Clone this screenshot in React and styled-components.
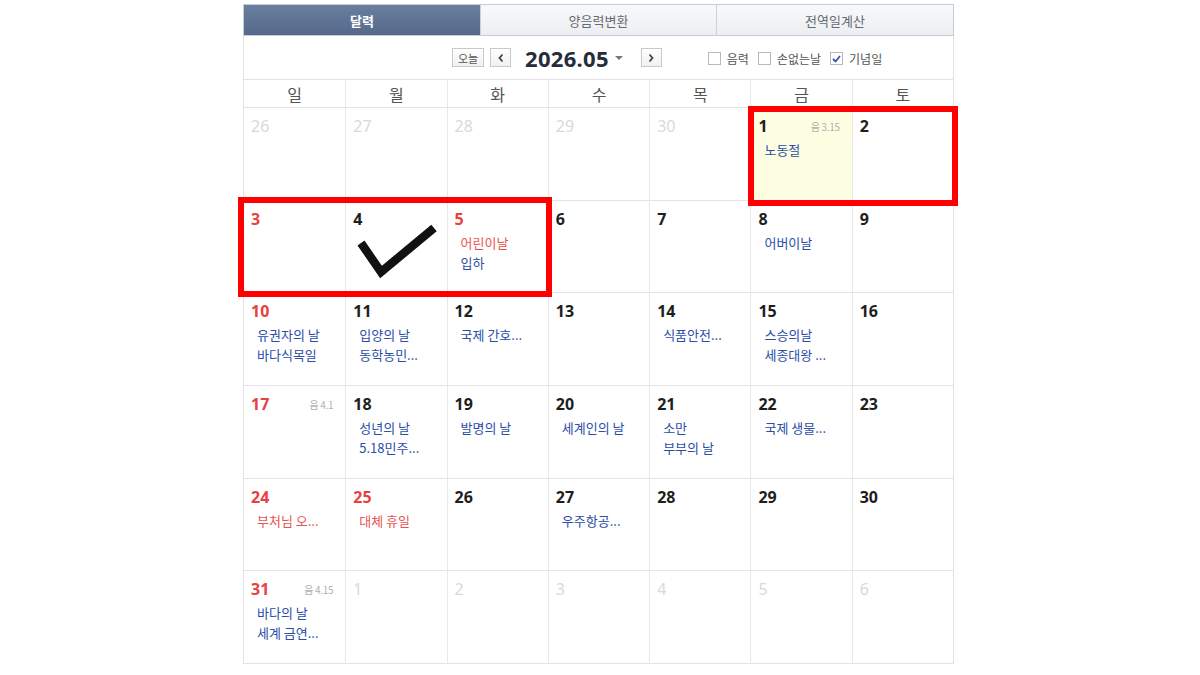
import React from 'react';
import styled, { createGlobalStyle } from 'styled-components';

const GlobalStyle = createGlobalStyle`
  html, body {
    margin: 0;
    padding: 0;
    background: #ffffff;
    font-family: "Noto Sans", "Noto Sans CJK KR", sans-serif;
  }
`;

const Page = styled.div`
  width: 1200px;
  height: 675px;
  overflow: hidden;
  padding-top: 4px;
  box-sizing: border-box;
`;

const Calendar = styled.div`
  position: relative;
  width: 711px;
  margin-left: 243px;
`;

const Tabs = styled.div`
  display: grid;
  grid-template-columns: 236px 236px 1fr;
  height: 32px;
  border: 1px solid #c6ccd5;
  box-sizing: border-box;
`;

const Tab = styled.div`
  display: flex;
  align-items: center;
  justify-content: center;
  font-size: 13px;
  font-family: "Noto Sans CJK KR", sans-serif;
  font-weight: ${p => (p.active ? 700 : 400)};
  color: ${p => (p.active ? '#ffffff' : '#666a72')};
  background: ${p =>
    p.active
      ? 'linear-gradient(#6a7fa0, #55688a)'
      : 'linear-gradient(#f8f9fa, #eceef2)'};
  border-left: ${p => (p.first ? 'none' : '1px solid #ccd1d9')};
`;

const Toolbar = styled.div`
  position: relative;
  height: 44px;
  display: flex;
  align-items: center;
  border-left: 1px solid #e2e2e2;
  border-right: 1px solid #e2e2e2;
  border-bottom: 1px solid #e2e2e2;
  box-sizing: border-box;
`;

const Nav = styled.div`
  display: flex;
  align-items: center;
  margin-left: 208px;
`;

const SmallButton = styled.button`
  height: 19px;
  min-width: ${p => (p.wide ? '32px' : '21px')};
  padding: 0 ${p => (p.wide ? '4px' : '0')};
  margin-right: ${p => p.gap || 0}px;
  border: 1px solid #c9c9c9;
  background: linear-gradient(#ffffff, #f1f1f1);
  color: #555;
  font-size: 11px;
  font-family: "Noto Sans CJK KR", sans-serif;
  display: flex;
  align-items: center;
  justify-content: center;
  box-sizing: border-box;
  cursor: pointer;
`;

const MonthTitle = styled.div`
  display: flex;
  align-items: center;
  font-family: "Noto Sans", "Noto Sans CJK KR", sans-serif;
  font-size: 22px;
  font-weight: 700;
  color: #262c3a;
  margin: 0 18px 0 14px;
  letter-spacing: 0.3px;
`;

const Caret = styled.span`
  margin-left: 6px;
  width: 0;
  height: 0;
  border-left: 4px solid transparent;
  border-right: 4px solid transparent;
  border-top: 4px solid #777;
`;

const Options = styled.div`
  display: flex;
  align-items: center;
  margin-left: 46px;
  margin-top: 2px;
`;

const Option = styled.label`
  display: flex;
  align-items: center;
  margin-right: 9px;
  font-size: 12px;
  color: #555;
  font-family: "Noto Sans CJK KR", sans-serif;
`;

const Box = styled.span`
  width: 13px;
  height: 13px;
  border: 1px solid #b8b8b8;
  background: #fff;
  box-sizing: border-box;
  margin-right: 6px;
  display: flex;
  align-items: center;
  justify-content: center;
`;

const WeekHeader = styled.div`
  display: grid;
  grid-template-columns: repeat(7, 1fr);
  height: 28px;
  border-left: 1px solid #e2e2e2;
  border-right: 1px solid #e2e2e2;
  border-bottom: 1px solid #e2e2e2;
  box-sizing: border-box;
`;

const WeekDay = styled.div`
  display: flex;
  align-items: center;
  justify-content: center;
  font-size: 16px;
  color: #555;
  font-family: "Noto Sans CJK KR", sans-serif;
  border-left: ${p => (p.first ? 'none' : '1px solid #e8e8e8')};
`;

const Grid = styled.div`
  display: grid;
  grid-template-columns: repeat(7, 1fr);
  grid-auto-rows: 92.7px;
  border-left: 1px solid #e2e2e2;
  border-right: 1px solid #e2e2e2;
`;

const Cell = styled.div`
  position: relative;
  background: ${p => (p.today ? '#fdfde1' : '#fff')};
  border-left: ${p => (p.first ? 'none' : '1px solid #e8e8e8')};
  border-bottom: 1px solid #e4e4e4;
  padding: 8px 0 0 7px;
  box-sizing: border-box;
  overflow: hidden;
`;

const Num = styled.div`
  font-size: 16px;
  line-height: 20px;
  font-family: "Noto Sans", sans-serif;
  color: ${p => (p.muted ? '#d9d9d9' : p.red ? '#e8413f' : '#1e1e1e')};
  font-weight: ${p => (p.muted ? 400 : 700)};
`;

const Lunar = styled.span`
  position: absolute;
  top: 11px;
  right: 12px;
  font-size: 10px;
  color: #b0b0b0;
  font-family: "Noto Sans CJK KR", sans-serif;
  letter-spacing: -0.3px;
`;

const Events = styled.div`
  margin-top: 4px;
  padding-left: 6px;
`;

const Event = styled.div`
  font-size: 13px;
  line-height: 20px;
  white-space: nowrap;
  font-family: "Noto Sans CJK KR", sans-serif;
  color: ${p => (p.red ? '#e8534f' : '#2a4ea8')};
`;

const RedFrame = styled.div`
  position: absolute;
  left: ${p => p.x}px;
  top: ${p => p.y}px;
  width: ${p => p.w}px;
  height: ${p => p.h}px;
  border: 6px solid #ff0000;
  box-sizing: border-box;
  pointer-events: none;
`;

const CheckMark = styled.svg`
  position: absolute;
  left: 110px;
  top: 214px;
  pointer-events: none;
`;

const weekdays = ['일', '월', '화', '수', '목', '금', '토'];

const days = [
  { n: 26, muted: true }, { n: 27, muted: true }, { n: 28, muted: true },
  { n: 29, muted: true }, { n: 30, muted: true },
  { n: 1, today: true, lunar: '음 3.15', ev: [['노동절']] },
  { n: 2 },
  { n: 3, red: true }, { n: 4 },
  { n: 5, red: true, ev: [['어린이날', true], ['입하']] },
  { n: 6 }, { n: 7 }, { n: 8, ev: [['어버이날']] }, { n: 9 },
  { n: 10, red: true, ev: [['유권자의 날'], ['바다식목일']] },
  { n: 11, ev: [['입양의 날'], ['동학농민...']] },
  { n: 12, ev: [['국제 간호...']] },
  { n: 13 },
  { n: 14, ev: [['식품안전...']] },
  { n: 15, ev: [['스승의날'], ['세종대왕 ...']] },
  { n: 16 },
  { n: 17, red: true, lunar: '음 4.1' },
  { n: 18, ev: [['성년의 날'], ['5.18민주...']] },
  { n: 19, ev: [['발명의 날']] },
  { n: 20, ev: [['세계인의 날']] },
  { n: 21, ev: [['소만'], ['부부의 날']] },
  { n: 22, ev: [['국제 생물...']] },
  { n: 23 },
  { n: 24, red: true, ev: [['부처님 오...', true]] },
  { n: 25, red: true, ev: [['대체 휴일', true]] },
  { n: 26 },
  { n: 27, ev: [['우주항공...']] },
  { n: 28 }, { n: 29 }, { n: 30 },
  { n: 31, red: true, lunar: '음 4.15', ev: [['바다의 날'], ['세계 금연...']] },
  { n: 1, muted: true }, { n: 2, muted: true }, { n: 3, muted: true },
  { n: 4, muted: true }, { n: 5, muted: true }, { n: 6, muted: true },
];

export default function App() {
  return (
    <Page>
      <GlobalStyle />
      <Calendar>
        <Tabs>
          <Tab active first>달력</Tab>
          <Tab>양음력변환</Tab>
          <Tab>전역일계산</Tab>
        </Tabs>

        <Toolbar>
          <Nav>
            <SmallButton wide gap={6}>오늘</SmallButton>
            <SmallButton>
              <svg width="8" height="10" viewBox="0 0 8 10">
                <path d="M5.5 1.5 L2.5 5 L5.5 8.5" fill="none" stroke="#444" strokeWidth="1.8" />
              </svg>
            </SmallButton>
            <MonthTitle>
              2026.05
              <Caret />
            </MonthTitle>
            <SmallButton>
              <svg width="8" height="10" viewBox="0 0 8 10">
                <path d="M2.5 1.5 L5.5 5 L2.5 8.5" fill="none" stroke="#444" strokeWidth="1.8" />
              </svg>
            </SmallButton>
          </Nav>
          <Options>
            <Option><Box />음력</Option>
            <Option><Box />손없는날</Option>
            <Option>
              <Box>
                <svg width="9" height="8" viewBox="0 0 9 8">
                  <path d="M1 4 L3.5 6.5 L8 1" fill="none" stroke="#2b56b0" strokeWidth="1.8" />
                </svg>
              </Box>
              기념일
            </Option>
          </Options>
        </Toolbar>

        <WeekHeader>
          {weekdays.map((d, i) => (
            <WeekDay key={d} first={i === 0}>{d}</WeekDay>
          ))}
        </WeekHeader>

        <Grid>
          {days.map((d, i) => (
            <Cell key={i} first={i % 7 === 0} today={d.today}>
              <Num muted={d.muted} red={d.red}>{d.n}</Num>
              {d.lunar && <Lunar>{d.lunar}</Lunar>}
              {d.ev && (
                <Events>
                  {d.ev.map(([t, red]) => (
                    <Event key={t} red={red}>{t}</Event>
                  ))}
                </Events>
              )}
            </Cell>
          ))}
        </Grid>

        <RedFrame x={505} y={102} w={210} h={100} />
        <RedFrame x={-5} y={193} w={314} h={100} />
        <CheckMark width="90" height="70" viewBox="0 0 90 70">
          <path d="M8 25 L28 54 L81 10" fill="none" stroke="#111" strokeWidth="8.5" strokeLinejoin="miter" />
        </CheckMark>
      </Calendar>
    </Page>
  );
}
